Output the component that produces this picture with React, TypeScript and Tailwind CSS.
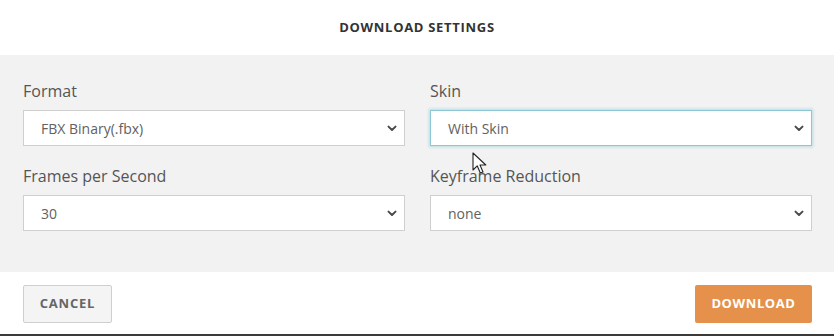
import React from "react";

function Chevron() {
  return (
    <svg width="10" height="7" viewBox="0 0 10 7" className="shrink-0">
      <polyline points="1.5,1.6 5,5 8.5,1.6" fill="none" stroke="#4a4a4a" strokeWidth="2" strokeLinecap="round" strokeLinejoin="round" />
    </svg>
  );
}

function Field({ label, value, focused }: { label: string; value: string; focused?: boolean }) {
  return (
    <div className="flex flex-col">
      <div className="text-[16px] leading-[20px] text-[#555] mb-[9px]">{label}</div>
      <div
        className={
          "h-[36px] bg-white flex items-center justify-between pl-[17px] pr-[7px] border " +
          (focused
            ? "border-[#8cc7d6] shadow-[0_0_3px_1px_rgba(120,190,210,0.45)]"
            : "border-[#cfcfcf]")
        }
      >
        <span className="text-[14px] text-[#616161]">{value}</span>
        <Chevron />
      </div>
    </div>
  );
}

export default function App() {
  return (
    <div
      className="w-[834px] h-[336px] bg-white relative overflow-hidden flex flex-col"
      style={{ fontFamily: '"Open Sans", "Liberation Sans", sans-serif' }}
    >
      <div className="h-[55px] flex items-center justify-center shrink-0">
        <span className="text-[13px] font-bold tracking-[0.7px] text-[#333] uppercase">Download Settings</span>
      </div>
      <div className="h-[217px] bg-[#f2f2f2] pl-[23px] pr-[22px] pt-[26px] grid grid-cols-2 gap-x-[25px] gap-y-[20px] content-start shrink-0">
        <Field label="Format" value="FBX Binary(.fbx)" />
        <Field label="Skin" value="With Skin" focused />
        <Field label="Frames per Second" value="30" />
        <Field label="Keyframe Reduction" value="none" />
      </div>
      <div className="h-[62px] flex items-center justify-between pl-[23px] pr-[22px] pt-[1px] shrink-0">
        <button className="h-[38px] w-[89px] bg-[#f4f4f4] border border-[#cfcfcf] rounded-[2px] text-[13px] font-bold text-[#666] tracking-[0.8px]">
          CANCEL
        </button>
        <button className="h-[38px] w-[117px] bg-[#e5914b] rounded-[2px] text-[13px] font-bold text-white tracking-[0.6px]">
          DOWNLOAD
        </button>
      </div>
      <div className="h-[2px] bg-[#3a3a3a] shrink-0" />
      <svg className="absolute left-[472px] top-[152px]" width="15" height="23" viewBox="0 0 15 23">
        <path d="M1 1 L1 18 L5.2 13.8 L8.3 21 L11 20 L8 13 L13.8 13 Z" fill="white" stroke="#222" strokeWidth="1.1" strokeLinejoin="round" />
      </svg>
    </div>
  );
}
